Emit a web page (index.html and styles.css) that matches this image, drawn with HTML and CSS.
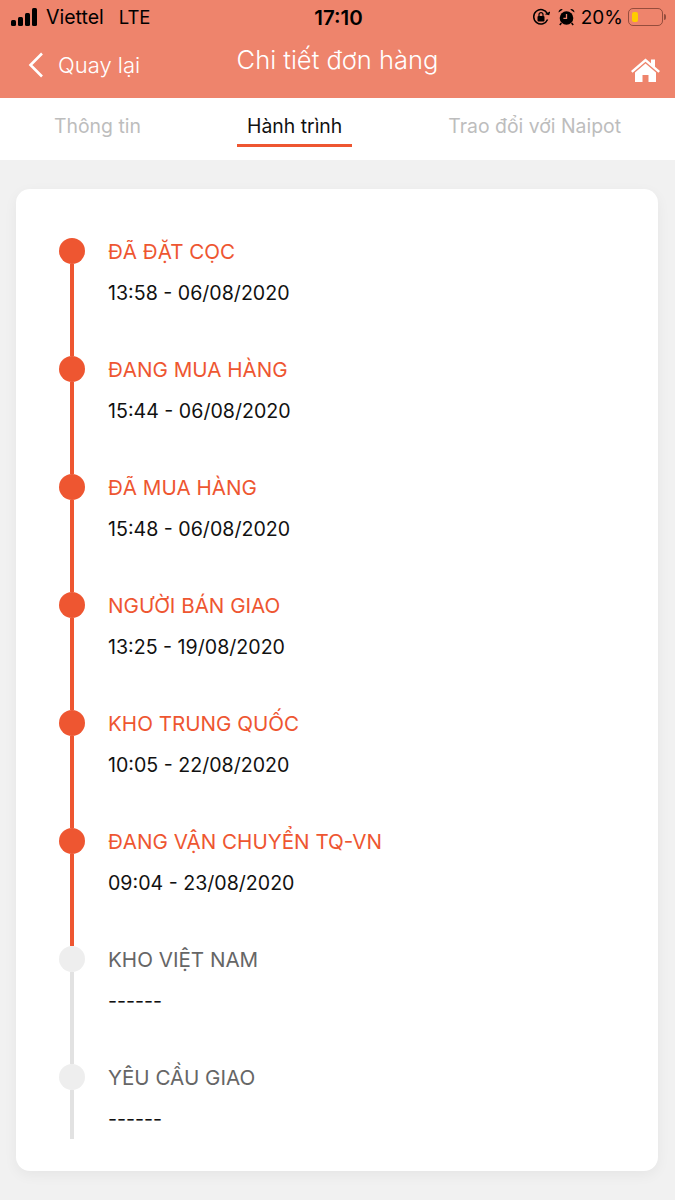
FILE: index.html
```html
<!DOCTYPE html>
<html lang="vi">
<head>
    <meta charset="UTF-8">
    <meta name="viewport" content="width=device-width, initial-scale=1.0">
    <title>Chi tiết đơn hàng</title>
    <link rel="stylesheet" href="styles.css">
</head>
<body>
    <header class="header">
        <div class="status-bar">
            <div class="status-left">
                <svg class="signal" width="28" height="18" viewBox="0 0 28 18">
                    <rect x="0" y="12" width="5" height="6" rx="1.5"/>
                    <rect x="7" y="9" width="5" height="9" rx="1.5"/>
                    <rect x="14" y="5" width="5" height="13" rx="1.5"/>
                    <rect x="21" y="0" width="5" height="18" rx="1.5"/>
                </svg>
                <span class="carrier">Viettel</span>
                <span class="network">LTE</span>
            </div>
            <div class="status-time">17:10</div>
            <div class="status-right">
                <svg class="lock-icon" width="18" height="18" viewBox="0 0 18 18">
                    <path d="M15.6 11.5A7.2 7.2 0 1 1 15.4 5.6" fill="none" stroke="#000" stroke-width="1.5"/>
                    <path d="M13 6.6l4.6.2.2-4z" fill="#000" transform="rotate(12 15 5)"/>
                    <rect x="5.5" y="8" width="7" height="5.5" rx="1"/>
                    <path d="M7 8V6.6a2 2 0 0 1 4 0V8" fill="none" stroke="#000" stroke-width="1.2"/>
                </svg>
                <svg class="alarm-icon" width="17" height="18" viewBox="0 0 17 18">
                    <circle cx="8.5" cy="10" r="6.8"/>
                    <path d="M0.6 4.6a3 3 0 0 1 4.2-3.2zM16.4 4.6a3 3 0 0 0-4.2-3.2z"/>
                    <path d="M3.4 15l-1.6 2M13.6 15l1.6 2" stroke="#000" stroke-width="1.5"/>
                    <path d="M8.5 6v4.4H5.4" fill="none" stroke="#ee846c" stroke-width="1.3"/>
                </svg>
                <span class="percent">20%</span>
                <div class="battery">
                    <div class="battery-level"></div>
                </div>
                <div class="battery-nub"></div>
            </div>
        </div>
        <div class="nav-bar">
            <a class="back">
                <svg width="16" height="26" viewBox="0 0 16 26">
                    <path d="M14 1.5L2.5 13L14 24.5" fill="none" stroke="#fff" stroke-width="2.6"/>
                </svg>
                <span>Quay lại</span>
            </a>
            <h1 class="nav-title">Chi tiết đơn hàng</h1>
            <a class="home">
                <svg width="29" height="24" viewBox="0 0 29 24">
                    <path d="M14.5 0.5L0 13l1.6 1.8L14.5 3.7l12.900 11.100L29 13l-5-4.300V1.500h-4v3.800z" fill="#fff"/>
                    <path d="M14.500 5.600L4 14.600V24h7.500v-7h6v7H25v-9.400z" fill="#fff"/>
                </svg>
            </a>
        </div>
    </header>

    <nav class="tabs">
        <div class="tab">Thông tin</div>
        <div class="tab active">Hành trình</div>
        <div class="tab">Trao đổi với Naipot</div>
    </nav>

    <main class="content">
        <div class="card">
            <div class="step done">
                <div class="marker"><div class="dot"></div><div class="line"></div></div>
                <div class="info"><div class="step-title">ĐÃ ĐẶT CỌC</div><div class="step-time">13:58 - 06/08/2020</div></div>
            </div>
            <div class="step done">
                <div class="marker"><div class="dot"></div><div class="line"></div></div>
                <div class="info"><div class="step-title">ĐANG MUA HÀNG</div><div class="step-time">15:44 - 06/08/2020</div></div>
            </div>
            <div class="step done">
                <div class="marker"><div class="dot"></div><div class="line"></div></div>
                <div class="info"><div class="step-title">ĐÃ MUA HÀNG</div><div class="step-time">15:48 - 06/08/2020</div></div>
            </div>
            <div class="step done">
                <div class="marker"><div class="dot"></div><div class="line"></div></div>
                <div class="info"><div class="step-title">NGƯỜI BÁN GIAO</div><div class="step-time">13:25 - 19/08/2020</div></div>
            </div>
            <div class="step done">
                <div class="marker"><div class="dot"></div><div class="line"></div></div>
                <div class="info"><div class="step-title">KHO TRUNG QUỐC</div><div class="step-time">10:05 - 22/08/2020</div></div>
            </div>
            <div class="step done">
                <div class="marker"><div class="dot"></div><div class="line"></div></div>
                <div class="info"><div class="step-title">ĐANG VẬN CHUYỂN TQ-VN</div><div class="step-time">09:04 - 23/08/2020</div></div>
            </div>
            <div class="step">
                <div class="marker"><div class="dot"></div><div class="line"></div></div>
                <div class="info"><div class="step-title">KHO VIỆT NAM</div><div class="step-time">------</div></div>
            </div>
            <div class="step last">
                <div class="marker"><div class="dot"></div><div class="line"></div></div>
                <div class="info"><div class="step-title">YÊU CẦU GIAO</div><div class="step-time">------</div></div>
            </div>
        </div>
    </main>
</body>
</html>
```

FILE: styles.css
```css
body {
    font-family: Inter, "Liberation Sans", sans-serif;
    margin: 0;
    background-color: #f1f1f1;
    color: #000;
}
.header {
    height: 98px;
    background-color: #ee846c;
}
.status-bar {
    height: 34px;
    padding: 0 9px 0 11px;
    display: grid;
    grid-template-columns: 1fr auto 1fr;
    align-items: center;
    font-size: 19px;
}
.status-left {
    display: flex;
    align-items: center;
}
.signal {
    margin-right: 7px;
}
.carrier {
    font-size: 19.5px;
}
.network {
    margin-left: 15px;
    font-size: 18.5px;
}
.status-time {
    font-weight: 600;
    font-size: 20.5px;
}
.status-right {
    display: flex;
    align-items: center;
    justify-content: flex-end;
}
.alarm-icon {
    margin-left: 8px;
}
.percent {
    margin-left: 6px;
}
.battery {
    width: 35px;
    height: 18px;
    margin-left: 5px;
    padding: 3px;
    box-sizing: border-box;
    border: 1.5px solid rgba(90, 40, 30, 0.6);
    border-radius: 5px;
}
.battery-level {
    width: 6px;
    height: 100%;
    background-color: #ffcc00;
    border-radius: 2px;
}
.battery-nub {
    width: 2px;
    height: 6px;
    margin-left: 1px;
    background-color: rgba(90, 40, 30, 0.6);
    border-radius: 0 2px 2px 0;
}
.nav-bar {
    height: 64px;
    padding: 0 15px;
    display: grid;
    grid-template-columns: 1fr auto 1fr;
    color: #fff;
}
.back {
    display: flex;
    align-items: center;
    gap: 14px;
    margin-left: 13px;
    font-size: 22px;
    font-weight: 300;
    height: 62px;
}
.nav-title {
    margin: 9px 0 0;
    font-size: 25.5px;
    font-weight: 300;
    line-height: 33px;
}
.home {
    justify-self: end;
    margin-top: 24px;
}
.tabs {
    height: 62px;
    padding: 0 44px;
    display: flex;
    justify-content: space-between;
    background: white;
}
.tab {
    height: 46px;
    padding: 0 10px;
    line-height: 56px;
    font-size: 19.4px;
    color: #bdbdbd;
}
.tab.active {
    color: #111;
    border-bottom: 3px solid #ee5631;
}
.content {
    padding: 29px 17px 30px 16px;
}
.card {
    padding: 49px 43px 32px;
    background: white;
    border-radius: 14px;
    box-shadow: 0 4px 14px rgba(0, 0, 0, 0.05);
}
.step {
    display: flex;
    height: 118px;
}
.step.last {
    height: 75px;
}
.marker {
    width: 26px;
    margin-right: 23px;
    display: flex;
    flex-direction: column;
    align-items: center;
}
.dot {
    width: 26px;
    height: 26px;
    flex: none;
    border-radius: 50%;
    background-color: #eeeeee;
}
.line {
    width: 4px;
    flex: 1;
    background-color: #e2e2e2;
}
.done .dot,
.done .line {
    background-color: #ee5631;
}
.info {
    padding-top: 1px;
}
.step-title {
    font-size: 20.6px;
    line-height: 26px;
    color: #666;
}
.done .step-title {
    color: #ee5631;
}
.step-time {
    margin-top: 15px;
    font-size: 19.6px;
    line-height: 26px;
    color: #111;
}
```
